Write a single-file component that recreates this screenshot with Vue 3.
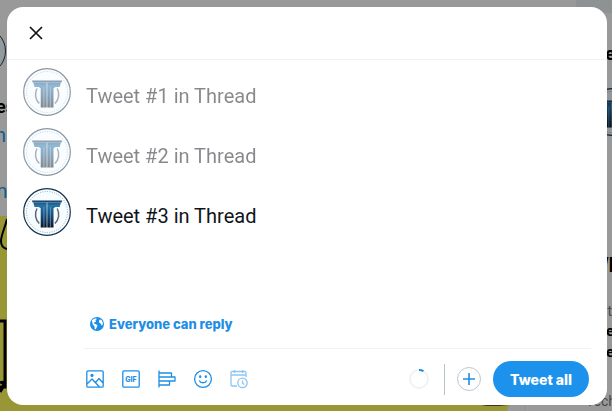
<template>
    <div class="page">
        <div class="backdrop" aria-hidden="true">
            <div class="feed">
                <div class="feed-top">
                    <span class="feed-avatar" />
                    <span class="feed-name">es</span>
                    <span class="feed-link">hr</span>
                    <span class="feed-link second">m</span>
                </div>
                <div class="feed-media">
                    <svg class="doodle" width="7" height="195" viewBox="0 0 7 195" fill="none" stroke="#000" stroke-width="2">
                        <path d="M7 3C5 12 1 19 1 25c0 4 2 7 6 8" />
                        <path d="M0 105h5v66H0M0 167c3-2 4 0 3 4l-3 5" stroke-width="3" />
                    </svg>
                    <svg class="shade" width="32" height="8" viewBox="0 0 32 8">
                        <path d="M2 2c6-3 20-3 27 0l-8 1H8z" fill="#39371f" />
                        <path d="M28 8c0-3 1-5 4-6v6z" fill="#999" />
                    </svg>
                </div>
            </div>
            <div class="sidebar">
                <div class="search" />
                <strong class="side-name">e</strong>
                <svg class="side-avatar" width="48" height="48" viewBox="0 0 48 48">
                    <use href="#pillar-logo" />
                </svg>
                <strong class="side-title">Wh</strong>
                <span class="side-meta">t</span>
                <strong class="side-topic">e</strong>
                <strong class="side-topic">e</strong>
                <span class="side-tag">Tech</span>
            </div>
        </div>

        <svg class="defs" width="0" height="0" aria-hidden="true">
            <defs>
                <linearGradient id="pillar-fill" x1="0" y1="12" x2="0" y2="40" gradientUnits="userSpaceOnUse">
                    <stop offset="0" stop-color="#123a60" />
                    <stop offset="0.2" stop-color="#2674a8" />
                    <stop offset="0.55" stop-color="#184d7c" />
                    <stop offset="1" stop-color="#07131f" />
                </linearGradient>
                <g id="pillar-logo">
                    <circle cx="24" cy="24" r="23.3" fill="#f7fcff" stroke="#173248" stroke-width="1.2" />
                    <circle cx="24" cy="24" r="20.5" fill="none" stroke="#789cb5" stroke-width="0.8" stroke-dasharray="1 1.4" />
                    <path d="M14 20.5a12.5 12.5 0 0 0 2.3 15M34.2 20.5a12.5 12.5 0 0 1-2.3 15" fill="none" stroke="#596875" stroke-width="1.5" />
                    <path d="M9 12.6h30.2l-.6 2H9.600z" fill="url(#pillar-fill)" />
                    <path d="M10.3 14.600h13.400V39.600h-6V20.200l-2-1.200h-4.200z" fill="url(#pillar-fill)" />
                    <path d="M24.300 14.600h13.600L36.700 19h-4.200l-2 1.200V39.600h-6.200z" fill="url(#pillar-fill)" />
                    <path d="M20.900 19v20.800M27.400 19v20.800" stroke="#8fb9d6" stroke-width="0.6" />
                </g>
            </defs>
        </svg>

        <section class="modal" role="dialog" aria-label="Compose thread">
            <header class="modal-header">
                <button class="close" type="button" aria-label="Close">
                    <svg width="20" height="20" viewBox="0 0 20 20" fill="none" stroke="#0f1419" stroke-width="1.7">
                        <path d="M4 4l12 12M16 4L4 16" />
                    </svg>
                </button>
            </header>

            <div class="thread">
                <div v-for="tweet in tweets" :key="tweet.id" class="tweet" :class="{ inactive: tweet.id !== activeId }">
                    <svg class="avatar" width="48" height="48" viewBox="0 0 48 48" aria-hidden="true">
                        <use href="#pillar-logo" />
                    </svg>
                    <textarea
                        v-model="tweet.text"
                        class="tweet-text"
                        rows="1"
                        :aria-label="`Tweet ${tweet.id} text`"
                        @focus="activeId = tweet.id"
                    />
                </div>
            </div>

            <footer class="modal-footer">
                <button class="audience" type="button">
                    <svg width="16" height="16" viewBox="0 0 16 16" aria-hidden="true">
                        <circle cx="8" cy="8" r="7" fill="#1d8ee6" />
                        <path d="M2.8 4.6l1.8-1.7 2.5-.6.6.8-1.2 1.4.5 1.3-1.8.7-.3 1 2.2.7 1.5 1.6-1 1.7-1 1.9-.9-.6-.3-2.6-1.6-1.7-.4-2zM10.9 3.6l1.6.4 1.3 2.6-.2 2.5-1 .5-.9-2-1.4-.8-.3-1.9z" fill="#fff" />
                    </svg>
                    Everyone can reply
                </button>

                <div class="toolbar">
                    <button
                        v-for="tool in tools"
                        :key="tool.name"
                        class="tool"
                        type="button"
                        :aria-label="tool.name"
                        :disabled="tool.disabled"
                    >
                        <svg width="20" height="20" viewBox="0 0 20 20" fill="none" stroke="currentColor" stroke-width="1.3" stroke-linejoin="round">
                            <path :d="tool.path" />
                            <path v-if="tool.fill" :d="tool.fill" fill="currentColor" stroke="none" />
                            <text v-if="tool.label" x="10" y="12.5" class="tool-label">{{ tool.label }}</text>
                        </svg>
                    </button>

                    <svg class="counter" width="22" height="22" viewBox="0 0 22 22" fill="none" role="img" aria-label="Characters used">
                        <circle cx="11" cy="11" r="9" stroke="#eff3f4" stroke-width="1.8" />
                        <path d="M11 2a9 9 0 0 1 4.5 1.2" stroke="#1d8ee6" stroke-width="2" />
                    </svg>
                    <span class="separator" />
                    <button class="add" type="button" aria-label="Add tweet" @click="addTweet">
                        <svg width="14" height="14" viewBox="0 0 14 14" fill="none" stroke="#1d8ee6" stroke-width="1.6">
                            <path d="M7 1v12M1 7h12" />
                        </svg>
                    </button>
                    <button class="submit" type="button">Tweet all</button>
                </div>
            </footer>
        </section>
    </div>
</template>

<script setup>
import { ref } from 'vue'

const tweets = ref([
    { id: 1, text: 'Tweet #1 in Thread' },
    { id: 2, text: 'Tweet #2 in Thread' },
    { id: 3, text: 'Tweet #3 in Thread' },
])

const activeId = ref(3)

const tools = [
    {
        name: 'Media',
        path: 'M3 1.8h14a1.2 1.2 0 0 1 1.2 1.2v14a1.2 1.2 0 0 1-1.2 1.2H3A1.2 1.2 0 0 1 1.8 17V3A1.2 1.2 0 0 1 3 1.8zM2 15l5-5 7.5 8M10.5 13.5l3.5-4 4 4.5',
        fill: 'M7 4.8a1.6 1.6 0 1 1 0 3.2 1.6 1.6 0 0 1 0-3.2z',
    },
    {
        name: 'GIF',
        path: 'M3 1.8h14a1.2 1.2 0 0 1 1.2 1.2v14a1.2 1.2 0 0 1-1.2 1.2H3A1.2 1.2 0 0 1 1.8 17V3A1.2 1.2 0 0 1 3 1.8z',
        label: 'GIF',
    },
    {
        name: 'Poll',
        path: 'M2 1.5v17M2 4h12.5v4H2M2 8h16v4H2M2 12h10.5v4H2',
    },
    {
        name: 'Emoji',
        path: 'M10 1.6a8.4 8.4 0 1 1 0 16.8 8.4 8.4 0 0 1 0-16.8zM6.2 11.5c1.3 3 6.3 3 7.6 0',
        fill: 'M7.2 6.3a1.2 1.4 0 1 1 0 2.8 1.2 1.4 0 0 1 0-2.8zM12.8 6.3a1.2 1.4 0 1 1 0 2.8 1.2 1.4 0 0 1 0-2.8z',
    },
    {
        name: 'Schedule',
        path: 'M8 17H3.2A1.2 1.2 0 0 1 2 15.8V3.7a1.2 1.2 0 0 1 1.2-1.2h12.6A1.2 1.2 0 0 1 17 3.7V8M2 6h15M5.5 1v3M13.5 1v3M13.5 9.2a4.7 4.7 0 1 1 0 9.4 4.7 4.7 0 0 1 0-9.4zM13.5 11.5V14l1.8 1.5',
        disabled: true,
    },
]

function addTweet() {
    const id = tweets.value.length + 1
    tweets.value.push({ id, text: '' })
    activeId.value = id
}
</script>

<style>
body {
    background: #999;
}
</style>

<style scoped>
.page {
    position: relative;
    display: flex;
    box-sizing: border-box;
    min-height: 100vh;
    padding: 7px 5px 6px 7px;
    font-family: Roboto, "Liberation Sans", sans-serif;
    overflow: hidden;
}

button,
textarea {
    margin: 0;
    padding: 0;
    border: 0;
    background: none;
    font-family: inherit;
}

button {
    cursor: pointer;
}

svg {
    display: block;
    flex: none;
}

.defs {
    position: absolute;
}

/* dimmed timeline behind the dialog */
.backdrop {
    position: absolute;
    inset: 0;
    display: flex;
    overflow: hidden;
    background: #999;
}

.feed {
    flex: 1;
    display: flex;
    flex-direction: column;
}

.feed-top {
    display: flex;
    flex-direction: column;
    align-items: flex-start;
    box-sizing: border-box;
    height: 216px;
    padding-top: 27px;
}

.feed-avatar {
    box-sizing: border-box;
    width: 48px;
    height: 48px;
    margin-left: -42px;
    border: 1px solid #15222c;
    border-radius: 50%;
    background: #939a9e;
}

.feed-name {
    margin: 20px 0 0 -4px;
    font-size: 18px;
    line-height: 24px;
    font-weight: 700;
}

.feed-link {
    margin: 4px 0 0 -5px;
    color: #125d90;
    font-size: 20px;
    line-height: 24px;
}

.feed-link.second {
    margin: 32px 0 0 -10px;
}

.feed-media {
    flex: 1;
    display: flex;
    align-items: flex-end;
    justify-content: space-between;
    margin-right: 13px;
    background: #999735;
}

.sidebar {
    display: flex;
    flex-direction: column;
    align-items: flex-end;
    width: 87px;
    border-left: 1px solid;
    border-image: linear-gradient(#999 50%, #8c8f90 50%) 1;
    overflow: hidden;
}

.search {
    width: 36px;
    height: 14px;
    background: #8f9293;
}

.side-name {
    margin: 29px -3px 0 0;
    font-size: 18px;
    line-height: 24px;
}

.side-avatar {
    margin: 22px -24px 0 0;
    filter: brightness(0.6);
}

.side-title {
    margin: 117px -8px 0 0;
    font-size: 20px;
    line-height: 24px;
}

.side-meta {
    margin-top: 24px;
    color: #42484c;
    font-size: 14px;
    line-height: 20px;
}

.side-topic {
    margin-right: -2px;
    font-size: 15px;
    line-height: 21px;
}

.side-tag {
    margin: 28px -4px 0 0;
    color: #42484c;
    font-size: 14px;
    line-height: 20px;
}

.modal {
    position: relative;
    flex: 1;
    display: flex;
    flex-direction: column;
    border-radius: 16px;
    background: #fff;
}

.modal-header {
    display: flex;
    align-items: center;
    height: 52px;
    padding-left: 19px;
    border-bottom: 1px solid #eff1f2;
}

.thread {
    flex: 1;
    padding: 8px 16px 0;
}

.tweet {
    display: flex;
    gap: 15px;
    height: 60px;
}

.tweet.inactive {
    opacity: 0.5;
}

.tweet-text {
    flex: 1;
    height: 24px;
    margin-top: 16px;
    outline: 0;
    resize: none;
    overflow: hidden;
    color: #0f1419;
    font-size: 20px;
    line-height: 24px;
}

.modal-footer {
    padding: 0 16px 0 77px;
}

.audience {
    display: flex;
    align-items: center;
    gap: 4px;
    height: 24px;
    margin: 0 0 12px 5px;
    color: #1d8ee6;
    font-family: Inter, sans-serif;
    font-size: 13px;
    font-weight: 800;
}

.toolbar {
    display: flex;
    align-items: center;
    padding: 12px 2px 8px 0;
    border-top: 1px solid #eff3f4;
}

.tool {
    display: flex;
    justify-content: center;
    width: 36px;
    padding: 8px 0;
    color: #1d8ee6;
}

.tool:first-child {
    margin-left: -7px;
}

.tool:disabled {
    opacity: 0.5;
    cursor: default;
}

.tool-label {
    fill: currentColor;
    stroke: none;
    font-family: Inter, sans-serif;
    font-size: 7px;
    font-weight: 800;
    text-anchor: middle;
}

.counter {
    margin-left: auto;
}

.separator {
    width: 1px;
    height: 31px;
    margin: 0 12px 0 14px;
    background: #b9c3c9;
}

.add {
    display: flex;
    align-items: center;
    justify-content: center;
    box-sizing: border-box;
    width: 24px;
    height: 24px;
    margin-right: 12px;
    border: 1px solid #bcc8d0;
    border-radius: 50%;
}

.submit {
    width: 96px;
    height: 36px;
    border-radius: 18px;
    background: #1d92ec;
    color: #fff;
    font-family: Inter, sans-serif;
    font-size: 14px;
    font-weight: 800;
}
</style>
